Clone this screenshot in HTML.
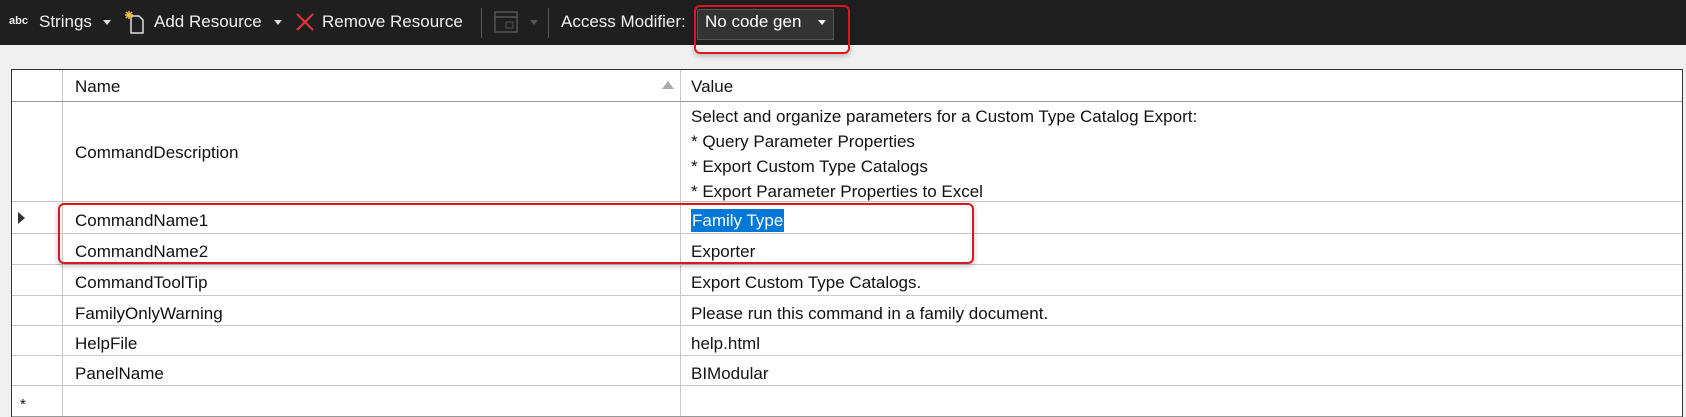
<!DOCTYPE html>
<html><head><meta charset="utf-8"><style>
*{margin:0;padding:0;box-sizing:border-box}
body{width:1686px;height:417px;background:#f0f0f0;font-family:"Liberation Sans",sans-serif;position:relative;overflow:hidden}
.tb{position:absolute;left:0;top:0;width:1686px;height:45px;background:#1f1f1f;color:#f0f0f0;font-size:17px}
.tb span,.tb div{position:absolute}
.t{top:12px}
.arr{width:0;height:0;border-left:4px solid transparent;border-right:4px solid transparent;border-top:5px solid #ddd;top:20px}
.sep{top:8px;width:1px;height:30px;background:#555}
.grid{position:absolute;left:11px;top:69px;width:1672px;height:348px;background:#fff;border:1px solid #333}
.r{position:absolute;left:0;width:1670px;border-bottom:1px solid #c8c8c8;font-size:17px;color:#111}
.c1{position:absolute;left:57px;padding-left:6px}
.c2{position:absolute;left:674px;padding-left:5px}
.vl{position:absolute;top:0;bottom:0;width:1px;background:#c8c8c8}
.red{position:absolute;border:2px solid #e0141e;border-radius:6px;box-shadow:0 2px 6px rgba(0,0,0,.25)}
</style></head><body>
<div class="tb">
<span style="left:9px;top:15px;font-size:11px;font-weight:bold">abc</span>
<span class="t" style="left:39px">Strings</span>
<div class="arr" style="left:103px"></div>
<svg style="position:absolute;left:125px;top:10px" width="22" height="24" viewBox="0 0 22 24"><path d="M6 6h8l4 4v13H6z" fill="none" stroke="#ddd" stroke-width="1.5"/><path d="M4 1v8M0 5h8M1 2l6 6M7 2l-6 6" stroke="#f0c040" stroke-width="1.5"/></svg>
<span class="t" style="left:154px">Add Resource</span>
<div class="arr" style="left:274px"></div>
<svg style="position:absolute;left:295px;top:12px" width="20" height="20"><path d="M2 2L18 18M18 2L2 18" stroke="#e8323c" stroke-width="2"/></svg>
<span class="t" style="left:322px">Remove Resource</span>
<div class="sep" style="left:481px"></div>
<svg style="position:absolute;left:494px;top:11px" width="24" height="22"><rect x="1" y="1" width="22" height="20" fill="none" stroke="#555" stroke-width="1.5"/><path d="M1 6h22" stroke="#555" stroke-width="1.5"/><rect x="12" y="11" width="7" height="6" fill="none" stroke="#555"/></svg>
<div class="arr" style="left:530px;border-top-color:#555"></div>
<div class="sep" style="left:548px"></div>
<span class="t" style="left:561px">Access Modifier:</span>
<div style="left:697px;top:9px;width:137px;height:31px;background:#333;border:1px solid #555"></div>
<span class="t" style="left:705px;color:#fff">No code gen</span>
<div class="arr" style="left:818px;border-top-color:#fff"></div>
</div>
<div class="red" style="left:694px;top:5px;width:156px;height:49px"></div>
<div class="grid">
<div class="vl" style="left:50px"></div>
<div class="vl" style="left:668px"></div>
<div class="r" style="top:0;height:32px;border-bottom-color:#999"><span class="c1" style="top:7px">Name</span><span style="position:absolute;left:650px;top:11px;width:0;height:0;border-left:6px solid transparent;border-right:6px solid transparent;border-bottom:8px solid #aaa"></span><span class="c2" style="top:7px">Value</span></div>
<div class="r" style="top:32px;height:100px;line-height:25px"><span class="c1" style="top:38px">CommandDescription</span><span class="c2" style="top:2px">Select and organize parameters for a Custom Type Catalog Export:<br>* Query Parameter Properties<br>* Export Custom Type Catalogs<br>* Export Parameter Properties to Excel</span></div>
<div class="r" style="top:132px;height:32px"><span style="position:absolute;left:6px;top:10px;width:0;height:0;border-top:6px solid transparent;border-bottom:6px solid transparent;border-left:7px solid #333"></span><span class="c1" style="top:9px">CommandName1</span><span class="c2" style="top:9px"><span style="background:#0078d7;color:#fff;padding:2px 1px">Family Type</span></span></div>
<div class="r" style="top:164px;height:31px"><span class="c1" style="top:8px">CommandName2</span><span class="c2" style="top:8px">Exporter</span></div>
<div class="r" style="top:195px;height:31px"><span class="c1" style="top:8px">CommandToolTip</span><span class="c2" style="top:8px">Export Custom Type Catalogs.</span></div>
<div class="r" style="top:226px;height:30px"><span class="c1" style="top:8px">FamilyOnlyWarning</span><span class="c2" style="top:8px">Please run this command in a family document.</span></div>
<div class="r" style="top:256px;height:30px"><span class="c1" style="top:8px">HelpFile</span><span class="c2" style="top:8px">help.html</span></div>
<div class="r" style="top:286px;height:30px"><span class="c1" style="top:8px">PanelName</span><span class="c2" style="top:8px">BIModular</span></div>
<div class="r" style="top:316px;height:31px;border-bottom:1px solid #999"><span style="position:absolute;left:8px;top:10px;font-size:15px">*</span></div>
</div>
<div class="red" style="left:58px;top:203px;width:916px;height:61px"></div>
</body></html>
